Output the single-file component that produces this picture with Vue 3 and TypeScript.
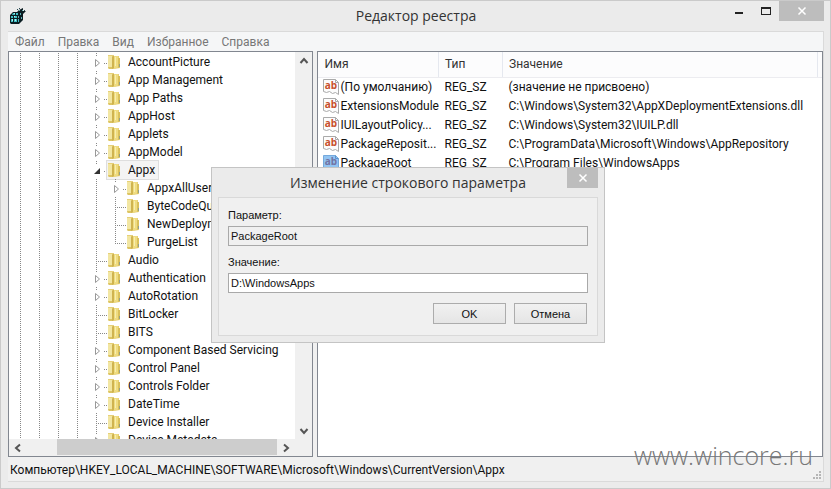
<script setup lang="ts">
import { ref } from 'vue'

interface TreeNode {
  name: string
  depth: number
  state: 'closed' | 'open' | 'leaf'
  last?: boolean
  selected?: boolean
}

interface RegistryValue {
  name: string
  type: string
  data: string
  selected?: boolean
}

const menu = ['Файл', 'Правка', 'Вид', 'Избранное', 'Справка']

const nodes: TreeNode[] = [
  { name: 'AccountPicture', depth: 0, state: 'closed' },
  { name: 'App Management', depth: 0, state: 'closed' },
  { name: 'App Paths', depth: 0, state: 'closed' },
  { name: 'AppHost', depth: 0, state: 'closed' },
  { name: 'Applets', depth: 0, state: 'closed' },
  { name: 'AppModel', depth: 0, state: 'closed' },
  { name: 'Appx', depth: 0, state: 'open', selected: true },
  { name: 'AppxAllUser', depth: 1, state: 'closed' },
  { name: 'ByteCodeQu', depth: 1, state: 'leaf' },
  { name: 'NewDeploym', depth: 1, state: 'leaf' },
  { name: 'PurgeList', depth: 1, state: 'leaf', last: true },
  { name: 'Audio', depth: 0, state: 'leaf' },
  { name: 'Authentication', depth: 0, state: 'closed' },
  { name: 'AutoRotation', depth: 0, state: 'closed' },
  { name: 'BitLocker', depth: 0, state: 'leaf' },
  { name: 'BITS', depth: 0, state: 'leaf' },
  { name: 'Component Based Servicing', depth: 0, state: 'closed' },
  { name: 'Control Panel', depth: 0, state: 'closed' },
  { name: 'Controls Folder', depth: 0, state: 'closed' },
  { name: 'DateTime', depth: 0, state: 'closed' },
  { name: 'Device Installer', depth: 0, state: 'leaf' },
  { name: 'Device Metadata', depth: 0, state: 'closed' },
]

const values: RegistryValue[] = [
  { name: '(По умолчанию)', type: 'REG_SZ', data: '(значение не присвоено)' },
  { name: 'ExtensionsModule', type: 'REG_SZ', data: 'C:\\Windows\\System32\\AppXDeploymentExtensions.dll' },
  { name: 'IUILayoutPolicy...', type: 'REG_SZ', data: 'C:\\Windows\\System32\\IUILP.dll' },
  { name: 'PackageReposit...', type: 'REG_SZ', data: 'C:\\ProgramData\\Microsoft\\Windows\\AppRepository' },
  { name: 'PackageRoot', type: 'REG_SZ', data: 'C:\\Program Files\\WindowsApps', selected: true },
]

const paramName = ref('PackageRoot')
const paramValue = ref('D:\\WindowsApps')
</script>

<template>
  <main class="window">
    <header class="titlebar">
      <svg class="app-icon" viewBox="0 0 17 17" aria-hidden="true">
        <path d="M1 8 4 5h4l2-2 4-2v3h3l-3 3v6l-4 4H2l-1-1z" fill="#0b1d22" />
        <path d="M4 6h2v2H3zM7 6h2v2H7zM2 9h2v2H2zM5 9h3v2H5zM2 12h2v3H2zM5 12h3v3H5zM9 12h1v3H9z" fill="#3fbfc4" />
        <path d="M5 6h1v1H5zM5 9h1v1H5zM3 12h1v2H3zM6 12h1v2H6z" fill="#b4f5f5" />
        <path d="M9 9h1v2H9zM11 6h1v2h-1zM12 10h1v2h-1zM10 3h1v1h-1zM13 3h1v1h-1z" fill="#5fb0b6" />
        <path d="M8 2h1v1H8zM15 3h1v1h-1zM10 1h1v1h-1z" fill="#24484f" />
      </svg>
      <h1>Редактор реестра</h1>
      <div class="caption">
        <button type="button" class="cap" aria-label="Свернуть">
          <svg viewBox="0 0 12 12"><path d="M2 7h8v2H2z" fill="#222" /></svg>
        </button>
        <button type="button" class="cap" aria-label="Развернуть">
          <svg viewBox="0 0 12 12"><path d="M1 2h10v8H1zM2 4v5h8V4z" fill="#222" fill-rule="evenodd" /></svg>
        </button>
        <button type="button" class="cap close" aria-label="Закрыть">
          <svg viewBox="0 0 12 12"><path d="m2.500 2.500 7 7m0-7-7 7" fill="none" stroke="#fff" stroke-width="1.500" /></svg>
        </button>
      </div>
    </header>

    <div class="client">
      <nav class="menubar">
        <button v-for="item in menu" :key="item" type="button">{{ item }}</button>
      </nav>

      <div class="panes">
        <section class="pane tree-pane">
          <ul class="tree" role="tree">
            <li v-for="n in nodes" :key="n.name" role="treeitem" class="node">
              <span v-for="g in 4 + n.depth" :key="g" class="guide"></span>
              <span class="branch" :class="[n.state, { last: n.last }]">
                <svg v-if="n.state !== 'leaf'" class="expander" viewBox="0 0 8 10" aria-hidden="true">
                  <path v-if="n.state === 'closed'" d="M1.500 1.500v7l4-3.500z" fill="#fff" stroke="#999" />
                  <path v-else d="M6 2v6H0z" fill="#333" />
                </svg>
              </span>
              <span class="key" :class="{ selected: n.selected }">
                <svg class="folder" viewBox="0 0 14 16" aria-hidden="true">
                  <path d="M1 1h5l1 1h5v3l1 1v8l-6 1H2l-1-1z" fill="#e6d078" />
                  <path d="M1 2h4v11H1z" fill="#f2e6a2" />
                  <path d="M1 13h4l1 2H2z" fill="#dcc463" />
                  <path d="M5 3 7 1v13l-2 1z" fill="#cfb34f" />
                  <path d="M7 2h4v11l-4 2z" fill="#efdc80" />
                  <path d="M8 3h1v9H8z" fill="#f8eeb0" />
                  <path d="M11 4h2v9l-2 1z" fill="#d9c05c" />
                  <path d="M12 10h1v3h-1z" fill="#93a08a" />
                </svg>
                <span>{{ n.name }}</span>
              </span>
            </li>
          </ul>
          <div class="vscroll">
            <button type="button" aria-label="Вверх">
              <svg viewBox="0 0 10 10"><path d="m1.500 7 3.500-4 3.500 4" /></svg>
            </button>
            <button type="button" aria-label="Вниз">
              <svg viewBox="0 0 10 10"><path d="m1.500 3 3.500 4 3.500-4" /></svg>
            </button>
          </div>
          <div class="hscroll">
            <button type="button" aria-label="Влево">
              <svg viewBox="0 0 10 10"><path d="M7 1.500 3 5l4 3.500" /></svg>
            </button>
            <div class="track"><div class="thumb"></div></div>
            <button type="button" aria-label="Вправо">
              <svg viewBox="0 0 10 10"><path d="m3 1.500 4 3.500-4 3.500" /></svg>
            </button>
          </div>
        </section>

        <section class="pane list-pane">
          <table>
            <colgroup><col class="c-name" /><col class="c-type" /><col /><col class="c-end" /></colgroup>
            <thead>
              <tr><th>Имя</th><th>Тип</th><th>Значение</th><td></td></tr>
            </thead>
            <tbody>
              <tr v-for="v in values" :key="v.name">
                <td class="name">
                  <div class="entry">
                    <svg class="value-icon" :class="{ selected: v.selected }" viewBox="0 0 16 16" aria-hidden="true">
                      <path class="sheet" d="M.5.5h12l3 3v12l-3-2-3 1-3-2-3 1-3-1z" />
                      <path class="fold" d="M12.500.5v3h3" />
                      <text x="8" y="10" text-anchor="middle">ab</text>
                    </svg>
                    <span>{{ v.name }}</span>
                  </div>
                </td>
                <td>{{ v.type }}</td>
                <td colspan="2">{{ v.data }}</td>
              </tr>
            </tbody>
          </table>
        </section>
      </div>

      <footer class="status">
        <span>Компьютер\HKEY_LOCAL_MACHINE\SOFTWARE\Microsoft\Windows\CurrentVersion\Appx</span>
        <svg class="grip" viewBox="0 0 8 8" aria-hidden="true">
          <path d="M6 0h2v2H6zM3 3h2v2H3zM6 3h2v2H6zM0 6h2v2H0zM3 6h2v2H3zM6 6h2v2H6z" fill="#b5b5b5" />
        </svg>
      </footer>
    </div>

    <form class="dialog" role="dialog" aria-labelledby="dialog-title" @submit.prevent>
      <div class="dialog-head">
        <h2 id="dialog-title">Изменение строкового параметра</h2>
        <button type="button" class="cap close" aria-label="Закрыть">
          <svg viewBox="0 0 12 12"><path d="m2.500 2.500 7 7m0-7-7 7" fill="none" stroke="#fff" stroke-width="1.500" /></svg>
        </button>
      </div>
      <div class="dialog-body">
        <label for="param-name">Параметр:</label>
        <input id="param-name" v-model="paramName" type="text" readonly />
        <label for="param-value">Значение:</label>
        <input id="param-value" v-model="paramValue" type="text" />
        <div class="actions">
          <button type="submit">OK</button>
          <button type="button">Отмена</button>
        </div>
      </div>
    </form>

    <p class="watermark">www.wincore.ru</p>
  </main>
</template>

<style>
body {
  background: #ebebeb;
}
</style>

<style scoped>
* {
  box-sizing: border-box;
}

.window {
  position: relative;
  display: flex;
  flex-direction: column;
  height: 100vh;
  padding: 0 6px 6px 7px;
  border: 1px solid #cacaca;
  background: #ebebeb;
  color: #111;
  font: 12px/18px Roboto, "Noto Sans", sans-serif;
  overflow: hidden;
}

button {
  margin: 0;
  padding: 0;
  border: 0;
  background: none;
  color: inherit;
  font: inherit;
}

svg {
  display: block;
  flex: none;
}

.titlebar {
  display: grid;
  grid-template-columns: 1fr auto 1fr;
  align-items: start;
  height: 30px;
}

.app-icon {
  width: 17px;
  height: 17px;
  margin: 6px 1px;
}

h1,
h2 {
  margin: 0;
  font-family: "Open Sans", "Noto Sans", sans-serif;
  font-size: 14px;
  font-weight: 400;
  line-height: 30px;
  color: #333;
  white-space: nowrap;
}

.caption {
  display: flex;
  justify-content: flex-end;
}

.cap {
  display: grid;
  place-items: center;
  width: 27px;
  height: 20px;
}

.cap svg {
  width: 12px;
  height: 12px;
}

.cap.close {
  width: 45px;
  background: #bdbdbd;
}

.client {
  display: flex;
  flex: 1;
  flex-direction: column;
  min-height: 0;
  border: 1px solid #dadada;
  border-left-width: 0;
  background: #f0f0f0;
}

.menubar {
  display: flex;
  gap: 13px;
  height: 19px;
  padding-left: 7px;
  background: #f5f6f7;
  color: #777;
}

.panes {
  display: flex;
  flex: 1;
  gap: 4px;
  min-height: 0;
}

.pane {
  border: 1px solid #828790;
  background: #fff;
  min-width: 0;
  overflow: hidden;
}

.tree-pane {
  display: grid;
  grid-template: minmax(0, 1fr) 17px / minmax(0, 1fr) 17px;
  flex: 304 1 0;
}

.list-pane {
  flex: 507 1 0;
}

.tree {
  margin: 0;
  padding: 1px 0 0 11px;
  list-style: none;
  overflow: hidden;
}

.node {
  display: flex;
  height: 18px;
  white-space: nowrap;
}

.guide,
.branch {
  flex: none;
  width: 19px;
  background: repeating-linear-gradient(#888 0 1px, transparent 1px 2px) 0 0 / 1px 100% no-repeat;
}

.branch {
  width: 11px;
  background:
    repeating-linear-gradient(#888 0 1px, transparent 1px 2px) 0 0 / 1px 100% no-repeat,
    repeating-linear-gradient(90deg, #888 0 1px, transparent 1px 2px) 0 10px / 100% 1px no-repeat;
}

.branch.last {
  background:
    repeating-linear-gradient(#888 0 1px, transparent 1px 2px) 0 0 / 1px 10px no-repeat,
    repeating-linear-gradient(90deg, #888 0 1px, transparent 1px 2px) 0 10px / 100% 1px no-repeat;
}

.branch.closed,
.branch.open {
  background:
    repeating-linear-gradient(#888 0 1px, transparent 1px 2px) 0 0 / 1px 3px no-repeat,
    repeating-linear-gradient(90deg, #888 0 1px, transparent 1px 2px) 8px 10px / 3px 1px no-repeat;
}

.expander {
  width: 8px;
  height: 10px;
  margin: 5px 0 0 -2px;
}

.key {
  display: flex;
  gap: 7px;
  height: 18px;
  padding-right: 3px;
}

.key.selected {
  background: #f4f4f4;
  box-shadow: 0 0 0 1px #dedede;
}

.folder {
  width: 14px;
  height: 16px;
  margin-top: 1px;
}

.vscroll,
.hscroll {
  display: flex;
  justify-content: space-between;
  background: #f0f0f0;
}

.vscroll {
  flex-direction: column;
}

.hscroll {
  grid-column: 1 / 3;
  padding-right: 17px;
}

.vscroll button,
.hscroll button {
  display: grid;
  flex: none;
  place-items: center;
  width: 18px;
  height: 17px;
}

.vscroll svg,
.hscroll svg {
  width: 10px;
  height: 10px;
  fill: none;
  stroke: #555;
  stroke-width: 2;
}

.track {
  flex: 1;
  padding: 0 0 1px 30px;
}

.thumb {
  height: 100%;
  background: #cdcdcd;
}

table {
  width: 100%;
  border-collapse: collapse;
  table-layout: fixed;
}

.c-name {
  width: 121px;
}

.c-type {
  width: 64px;
}

.c-end {
  width: 5px;
}

th,
td {
  height: 19px;
  padding: 0 0 0 6px;
  font-weight: 400;
  text-align: left;
  white-space: nowrap;
}

thead th,
thead td {
  height: 25px;
  border-bottom: 1px solid #ececf0;
  background: #fcfcfd;
}

thead th {
  border-right: 1px solid #e5e8ef;
  color: #333;
}

thead th:first-child {
  padding-left: 7px;
}

td.name {
  padding-left: 5px;
}

.entry {
  display: flex;
  align-items: center;
  gap: 2px;
}

.value-icon {
  width: 16px;
  height: 16px;
}

.value-icon .sheet {
  fill: #fcfcfc;
  stroke: #aaa;
}

.value-icon .fold {
  fill: none;
  stroke: #aaa;
}

.value-icon text {
  fill: #c8502c;
  font: 700 10px "Open Sans", sans-serif;
}

.value-icon.selected .sheet {
  fill: #92c4f2;
  stroke: #75a9dc;
}

.value-icon.selected .fold {
  stroke: #5d93cc;
}

.value-icon.selected text {
  fill: #7274a4;
}

.status {
  display: flex;
  align-items: flex-start;
  justify-content: space-between;
  height: 24px;
  padding: 4px 2px 2px;
}

.grip {
  width: 8px;
  height: 8px;
  align-self: flex-end;
}

.dialog {
  position: absolute;
  top: 166px;
  left: 210px;
  width: 394px;
  padding: 0 6px 6px;
  border: 1px solid #c4c4c4;
  background: #ebebeb;
}

.dialog-head {
  display: grid;
  grid-template-columns: 31px 1fr 31px;
  align-items: start;
}

.dialog-head h2 {
  grid-column: 2;
  line-height: 29px;
  text-align: center;
}

.dialog-head .cap.close {
  width: 31px;
}

.dialog-body {
  display: flex;
  flex-direction: column;
  padding: 9px 9px 11px;
  border: 1px solid #d9d9d9;
  background: #f0f0f0;
  font: 11px/16px "Liberation Sans", Arial, sans-serif;
}

.dialog-body input {
  height: 20px;
  margin: 3px 0 8px;
  padding: 0 2px;
  border: 1px solid #a9a9a9;
  border-radius: 0;
  outline: 0;
  background: #fff;
  color: #111;
  font: inherit;
}

.dialog-body input[readonly] {
  background: #f0f0f0;
}

.actions {
  display: flex;
  justify-content: flex-end;
  gap: 8px;
  padding: 2px 1px 0 0;
}

.actions button {
  width: 73px;
  height: 21px;
  border: 1px solid #acacac;
  background: linear-gradient(#f1f1f1, #e5e5e5);
}

.watermark {
  position: absolute;
  right: 17px;
  bottom: 17px;
  margin: 0;
  color: #777;
  font-family: "Open Sans", "Noto Sans", sans-serif;
  font-size: 25px;
  font-weight: 300;
  line-height: 32px;
}
</style>
